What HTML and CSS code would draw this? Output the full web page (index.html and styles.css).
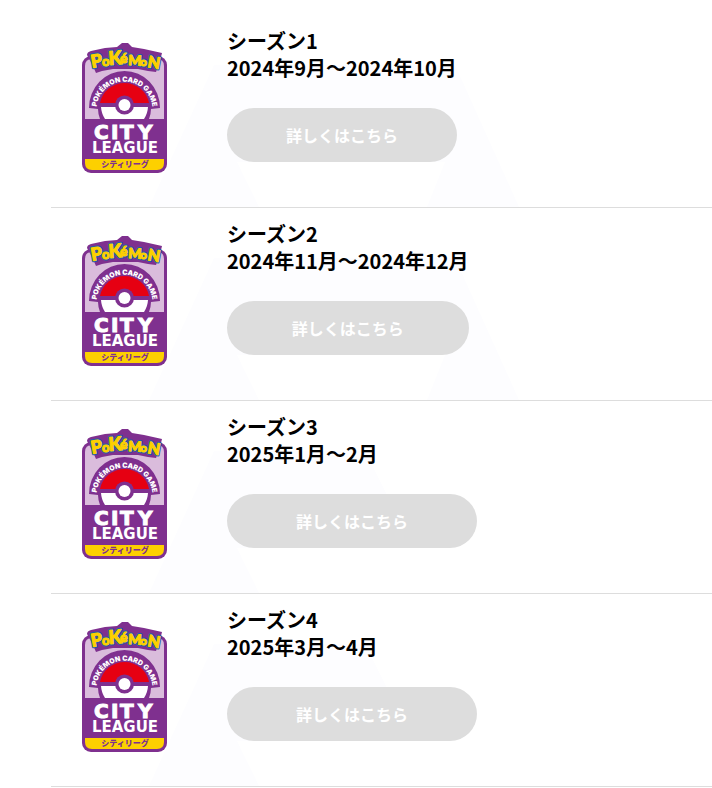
FILE: index.html
```html
<!DOCTYPE html>
<html lang="ja">
<head>
    <meta charset="UTF-8">
    <meta name="viewport" content="width=device-width, initial-scale=1.0">
    <title>シティリーグ</title>
    <link rel="stylesheet" href="styles.css">
</head>
<body>
    <!-- Badge shared by every season -->
    <svg class="symbols" aria-hidden="true">
        <defs>
            <g id="wordmark">
                <text x="10" y="25" font-size="18" transform="rotate(-10 10 25)">P</text>
                <text x="20" y="23" font-size="13">o</text>
                <text x="27" y="22" font-size="19" transform="rotate(-4 27 22)">K</text>
                <text x="38" y="20" font-size="14">é</text>
                <text x="46" y="22" font-size="14" transform="rotate(3 46 22)">M</text>
                <text x="58" y="23" font-size="12">o</text>
                <text x="65" y="24" font-size="16" transform="rotate(10 65 24)">N</text>
            </g>
        </defs>
        <symbol id="city-league" viewBox="0 0 85 130">
            <!-- Frame -->
            <rect x="0" y="13" width="85" height="117" rx="9" fill="#7f308f"/>
            <path d="M3 76V23q0-7 7-7h65q7 0 7 7v53z" fill="#dabcdc"/>
            <path d="M3 116h79v4q0 7-7 7H10q-7 0-7-7z" fill="#fdd000"/>
            <!-- Ball -->
            <path d="M7 65A35.500 37 0 0 1 78 65L69 66A27 27 0 0 1 67 76H18A27 27 0 0 1 16 66z" fill="#7f308f"/>
            <path d="M18 60A25 25 0 0 1 67 60z" fill="#e60012"/>
            <path d="M19 64H66A24 24 0 0 1 62 76H23A24 24 0 0 1 19 64z" fill="#fff"/>
            <circle cx="42.500" cy="62" r="9.500" fill="#7f308f"/>
            <circle cx="42.500" cy="62" r="6" fill="#fff"/>
            <path id="arc" d="M15 72A28 28 0 1 1 70 72" fill="none"/>
            <text class="arc-text" text-anchor="middle"><textPath href="#arc" startOffset="50%">POKÉMON CARD GAME</textPath></text>
            <!-- Wordmark -->
            <path d="M5 12Q5 9 9 8L23 5L35 4L40 0H46L50 4L62 6L80 10L78 18L74 29L66 28L56 26H31L20 28L14 30L10 21z" fill="#7f308f"/>
            <use class="wordmark wordmark-edge" href="#wordmark"/>
            <use class="wordmark wordmark-face" href="#wordmark"/>
            <g class="city">
                <text x="12" y="96">C</text>
                <text x="29" y="96">I</text>
                <text x="38" y="96">T</text>
                <text x="56" y="96">Y</text>
            </g>
            <text class="league" x="43" y="110" text-anchor="middle">LEAGUE</text>
            <text class="kana" x="43" y="124" text-anchor="middle">シティリーグ</text>
        </symbol>
    </svg>

    <ul class="season-list">
        <li class="season">
            <svg class="badge" role="img" aria-label="シティリーグ"><use href="#city-league"/></svg>
            <div class="info">
                <h2>シーズン1<br>2024年9月〜2024年10月</h2>
                <button type="button" disabled>詳しくはこちら</button>
            </div>
        </li>
        <li class="season">
            <svg class="badge" role="img" aria-label="シティリーグ"><use href="#city-league"/></svg>
            <div class="info">
                <h2>シーズン2<br>2024年11月〜2024年12月</h2>
                <button type="button" disabled>詳しくはこちら</button>
            </div>
        </li>
        <li class="season season-short">
            <svg class="badge" role="img" aria-label="シティリーグ"><use href="#city-league"/></svg>
            <div class="info">
                <h2>シーズン3<br>2025年1月〜2月</h2>
                <button type="button" disabled>詳しくはこちら</button>
            </div>
        </li>
        <li class="season season-short">
            <svg class="badge" role="img" aria-label="シティリーグ"><use href="#city-league"/></svg>
            <div class="info">
                <h2>シーズン4<br>2025年3月〜4月</h2>
                <button type="button" disabled>詳しくはこちら</button>
            </div>
        </li>
    </ul>
</body>
</html>
```
FILE: styles.css
```css
body {
    margin: 0;
    padding: 15px 0 0 51px;
    background-color: #fff;
    color: #000;
    font-family: "Noto Sans CJK JP", sans-serif;
}

.symbols {
    position: absolute;
    width: 0;
    height: 0;
}

/* Season rows */
.season-list {
    list-style: none;
    margin: 0;
    padding: 0;
}

.season {
    position: relative;
    display: flex;
    align-items: flex-start;
    gap: 60px;
    padding: 12px 31px 34px;
    border-bottom: 1px solid #ddd;
}

/* Faint peaks behind the row */
.season::before {
    content: "";
    position: absolute;
    z-index: -1;
    left: 98px;
    bottom: 0;
    width: 370px;
    height: 142px;
    background-color: #fdfdff;
    clip-path: polygon(0 100%, 65px 0, 306px 0, 100% 100%, 278px 100%, 296px 97px, 88px 97px, 110px 100%);
}

.season-short::before {
    clip-path: polygon(0 100%, 65px 0, 216px 0, 240px 48px, 240px 97px, 88px 97px, 110px 100%);
}

.badge {
    flex: none;
    width: 85px;
    height: 130px;
    margin-top: 16px;
}

.info {
    display: flex;
    flex-direction: column;
    gap: 27px;
}

.season-short .info {
    width: 250px;
}

h2 {
    margin: 0;
    font-size: 20px;
    font-weight: 700;
    line-height: 27px;
}

button {
    height: 54px;
    padding: 0;
    border: none;
    border-radius: 27px;
    background-color: #ddd;
    color: #fff;
    font-family: inherit;
    font-size: 16px;
    font-weight: 700;
}

/* Badge lettering */
.arc-text {
    font-family: Inter, sans-serif;
    font-size: 7px;
    font-weight: 900;
    fill: #fff;
}

.wordmark {
    font-family: Lato, sans-serif;
    font-weight: 900;
    fill: #fdd000;
    stroke-linejoin: round;
}

.wordmark-edge {
    stroke: #1d5fa8;
    stroke-width: 3px;
}

.wordmark-face {
    stroke: #fdd000;
    stroke-width: 1px;
}

.city,
.league {
    font-family: "DejaVu Sans", sans-serif;
    font-weight: 700;
    fill: #fff;
}

.city {
    font-size: 20px;
    stroke: #fff;
    stroke-width: 1px;
}

.league {
    font-size: 15px;
}

.kana {
    font-size: 8px;
    font-weight: 900;
    fill: #7f308f;
}
```
